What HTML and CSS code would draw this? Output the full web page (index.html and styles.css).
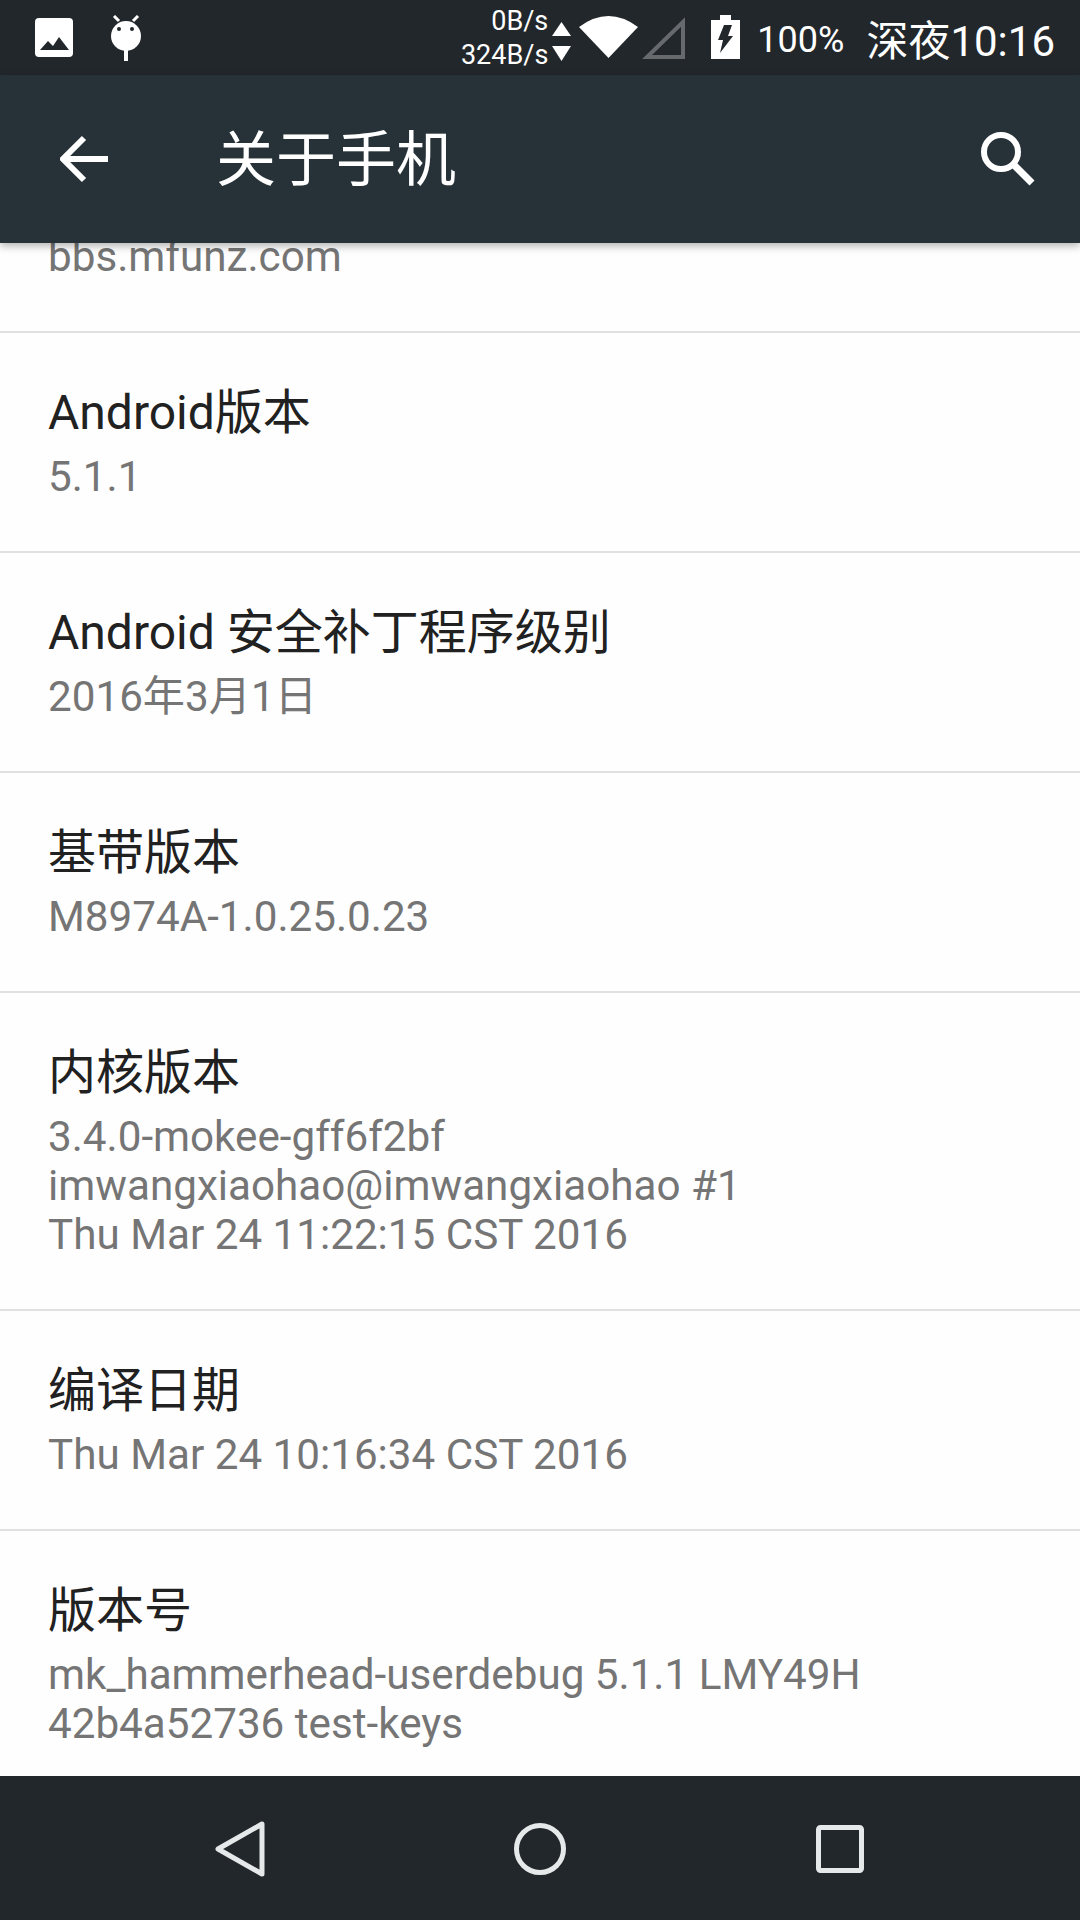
FILE: index.html
```html
<!DOCTYPE html>
<html>

<head>
    <meta charset="utf-8">
    <title>关于手机</title>
    <link rel="stylesheet" href="styles.css">
</head>

<body>
    <div class="phone">

        <!-- Status bar -->
        <div class="status-bar">
            <svg class="ic-image" width="38" height="39" viewBox="0 0 38 39">
                <rect width="38" height="39" rx="4" fill="#fff" />
                <path d="M5 32 L13 23 L18 28 L24 19 L34 32 Z" fill="#22272b" />
            </svg>
            <svg class="ic-bug" width="32" height="46" viewBox="0 0 32 46">
                <path d="M4 1 L9 6 M28 1 L23 6" stroke="#fff" stroke-width="3" />
                <circle cx="16" cy="21" r="15" fill="#fff" />
                <circle cx="9" cy="14" r="2" fill="#22272b" />
                <circle cx="22" cy="14" r="2" fill="#22272b" />
                <rect x="14" y="35" width="4" height="11" fill="#fff" />
            </svg>
            <div class="spacer"></div>
            <div class="net-speed">
                <span>0B/s</span>
                <span>324B/s</span>
            </div>
            <svg class="ic-arrows" width="19" height="40" viewBox="0 0 19 40">
                <path d="M9.5 0 L19 14 L0 14 Z M0 24 L19 24 L9.5 39 Z" fill="#fff" />
            </svg>
            <svg class="ic-wifi" width="59" height="44" viewBox="0 0 59 44">
                <path d="M29.5 43 L0 12 Q29.5 -10 59 12 Z" fill="#fff" />
            </svg>
            <svg class="ic-signal" width="43" height="42" viewBox="0 0 43 42">
                <path d="M41 5 L41 40 L5 40 Z" fill="none" stroke="#666a6c" stroke-width="4" />
            </svg>
            <svg class="ic-battery" width="29" height="44" viewBox="0 0 29 44">
                <path d="M9 0 H20 V5 H29 V44 H0 V5 H9 Z" fill="#fff" />
                <path d="M13 10 H21 L17 21 H22 L9 38 L12 25 H7 Z" fill="#22272b" />
            </svg>
            <span class="battery-text">100%</span>
            <span class="clock">深夜<b>10:16</b></span>
        </div>

        <!-- Action bar -->
        <div class="app-bar">
            <svg class="ic-back" width="48" height="48" viewBox="0 0 48 48">
                <path d="M48 24 H4 M24 3 L3 24 L24 45" fill="none" stroke="#fff" stroke-width="6" />
            </svg>
            <div class="app-title">关于手机</div>
            <svg class="ic-search" width="56" height="56" viewBox="0 0 56 56">
                <circle cx="21" cy="21" r="17" fill="none" stroke="#fff" stroke-width="6" />
                <path d="M33 33 L52 52" stroke="#fff" stroke-width="7" />
            </svg>
        </div>

        <!-- Settings list -->
        <div class="content">
            <div class="row row-clipped">
                <div class="sub">bbs.mfunz.com</div>
            </div>
            <div class="row">
                <div class="title">Android版本</div>
                <div class="sub">5.1.1</div>
            </div>
            <div class="row">
                <div class="title">Android 安全补丁程序级别</div>
                <div class="sub">2016年3月1日</div>
            </div>
            <div class="row">
                <div class="title">基带版本</div>
                <div class="sub">M8974A-1.0.25.0.23</div>
            </div>
            <div class="row">
                <div class="title">内核版本</div>
                <div class="sub">3.4.0-mokee-gff6f2bf</div>
                <div class="sub">imwangxiaohao@imwangxiaohao #1</div>
                <div class="sub">Thu Mar 24 11:22:15 CST 2016</div>
            </div>
            <div class="row">
                <div class="title">编译日期</div>
                <div class="sub">Thu Mar 24 10:16:34 CST 2016</div>
            </div>
            <div class="row">
                <div class="title">版本号</div>
                <div class="sub">mk_hammerhead-userdebug 5.1.1 LMY49H</div>
                <div class="sub">42b4a52736 test-keys</div>
            </div>
        </div>

        <!-- Navigation bar -->
        <div class="nav-bar">
            <svg class="ic-nav-back" width="50" height="56" viewBox="0 0 50 56">
                <path d="M47 3 L47 53 L3 28 Z" fill="none" stroke="#e6e9ea" stroke-width="5" stroke-linejoin="round" />
            </svg>
            <svg class="ic-nav-home" width="52" height="52" viewBox="0 0 52 52">
                <circle cx="26" cy="26" r="23.5" fill="none" stroke="#e6e9ea" stroke-width="5" />
            </svg>
            <svg class="ic-nav-recent" width="48" height="48" viewBox="0 0 48 48">
                <rect x="2.5" y="2.5" width="43" height="43" rx="2" fill="none" stroke="#e6e9ea" stroke-width="5" />
            </svg>
        </div>

    </div>
</body>

</html>
```

FILE: styles.css
```css
* {
    box-sizing: border-box;
}

body {
    margin: 0;
    background-color: #fefefe;
    font-family: Roboto, "Noto Sans CJK SC", sans-serif;
}

svg {
    display: block;
    flex: none;
}

.phone {
    width: 1080px;
    height: 1920px;
    display: flex;
    flex-direction: column;
    overflow: hidden;
}

/* Status bar */
.status-bar {
    height: 75px;
    flex: none;
    display: flex;
    align-items: center;
    background-color: #22272b;
    color: #fff;
    padding-left: 35px;
}

.ic-image {
    margin-top: -1px;
}

.ic-bug {
    margin-left: 37px;
    margin-top: 1px;
}

.spacer {
    flex: 1;
}

.net-speed {
    display: flex;
    flex-direction: column;
    align-items: flex-end;
    margin-top: 1px;
    font-size: 27px;
    line-height: 34px;
}

.ic-arrows {
    margin-left: 4px;
    margin-top: 8px;
}

.ic-wifi {
    margin-left: 8px;
    margin-top: -1px;
}

.ic-signal {
    margin-left: 4px;
    margin-top: 1px;
}

.ic-battery {
    margin-left: 26px;
    margin-top: -1px;
}

.battery-text {
    margin-left: 17px;
    margin-top: 5px;
    font-size: 36px;
}

.clock {
    margin-left: 22px;
    margin-right: 25px;
    font-size: 42px;
}

.clock b {
    font-weight: 400;
}

/* Action bar */
.app-bar {
    height: 168px;
    flex: none;
    display: flex;
    align-items: center;
    position: relative;
    z-index: 1;
    background-color: #263238;
    box-shadow: 0 3px 8px rgba(0, 0, 0, 0.3);
    padding-left: 60px;
}

.app-title {
    margin-left: 108px;
    margin-top: -10px;
    flex: 1;
    color: #fff;
    font-size: 60px;
}

.ic-search {
    margin-right: 44px;
}

/* Settings rows */
.content {
    flex: 1;
    overflow: hidden;
}

.row {
    min-height: 220px;
    padding: 50px 48px 50px;
    border-bottom: 2px solid #e0e0e0;
}

.row-clipped {
    min-height: 0;
    padding-top: 0;
    margin-top: -11px;
}

.title {
    height: 60px;
    margin-bottom: 9px;
    color: #212121;
    font-size: 48px;
    line-height: 60px;
}

.sub {
    color: #757575;
    font-size: 42.2px;
    line-height: 49px;
}

/* Navigation bar */
.nav-bar {
    height: 144px;
    flex: none;
    display: flex;
    align-items: center;
    position: relative;
    background-color: #22272b;
    padding-left: 215px;
}

.ic-nav-back {
    margin-top: 1px;
}

.ic-nav-home {
    margin-left: 249px;
    margin-top: 1px;
}

.ic-nav-recent {
    margin-left: 250px;
    margin-top: 1px;
}
```
